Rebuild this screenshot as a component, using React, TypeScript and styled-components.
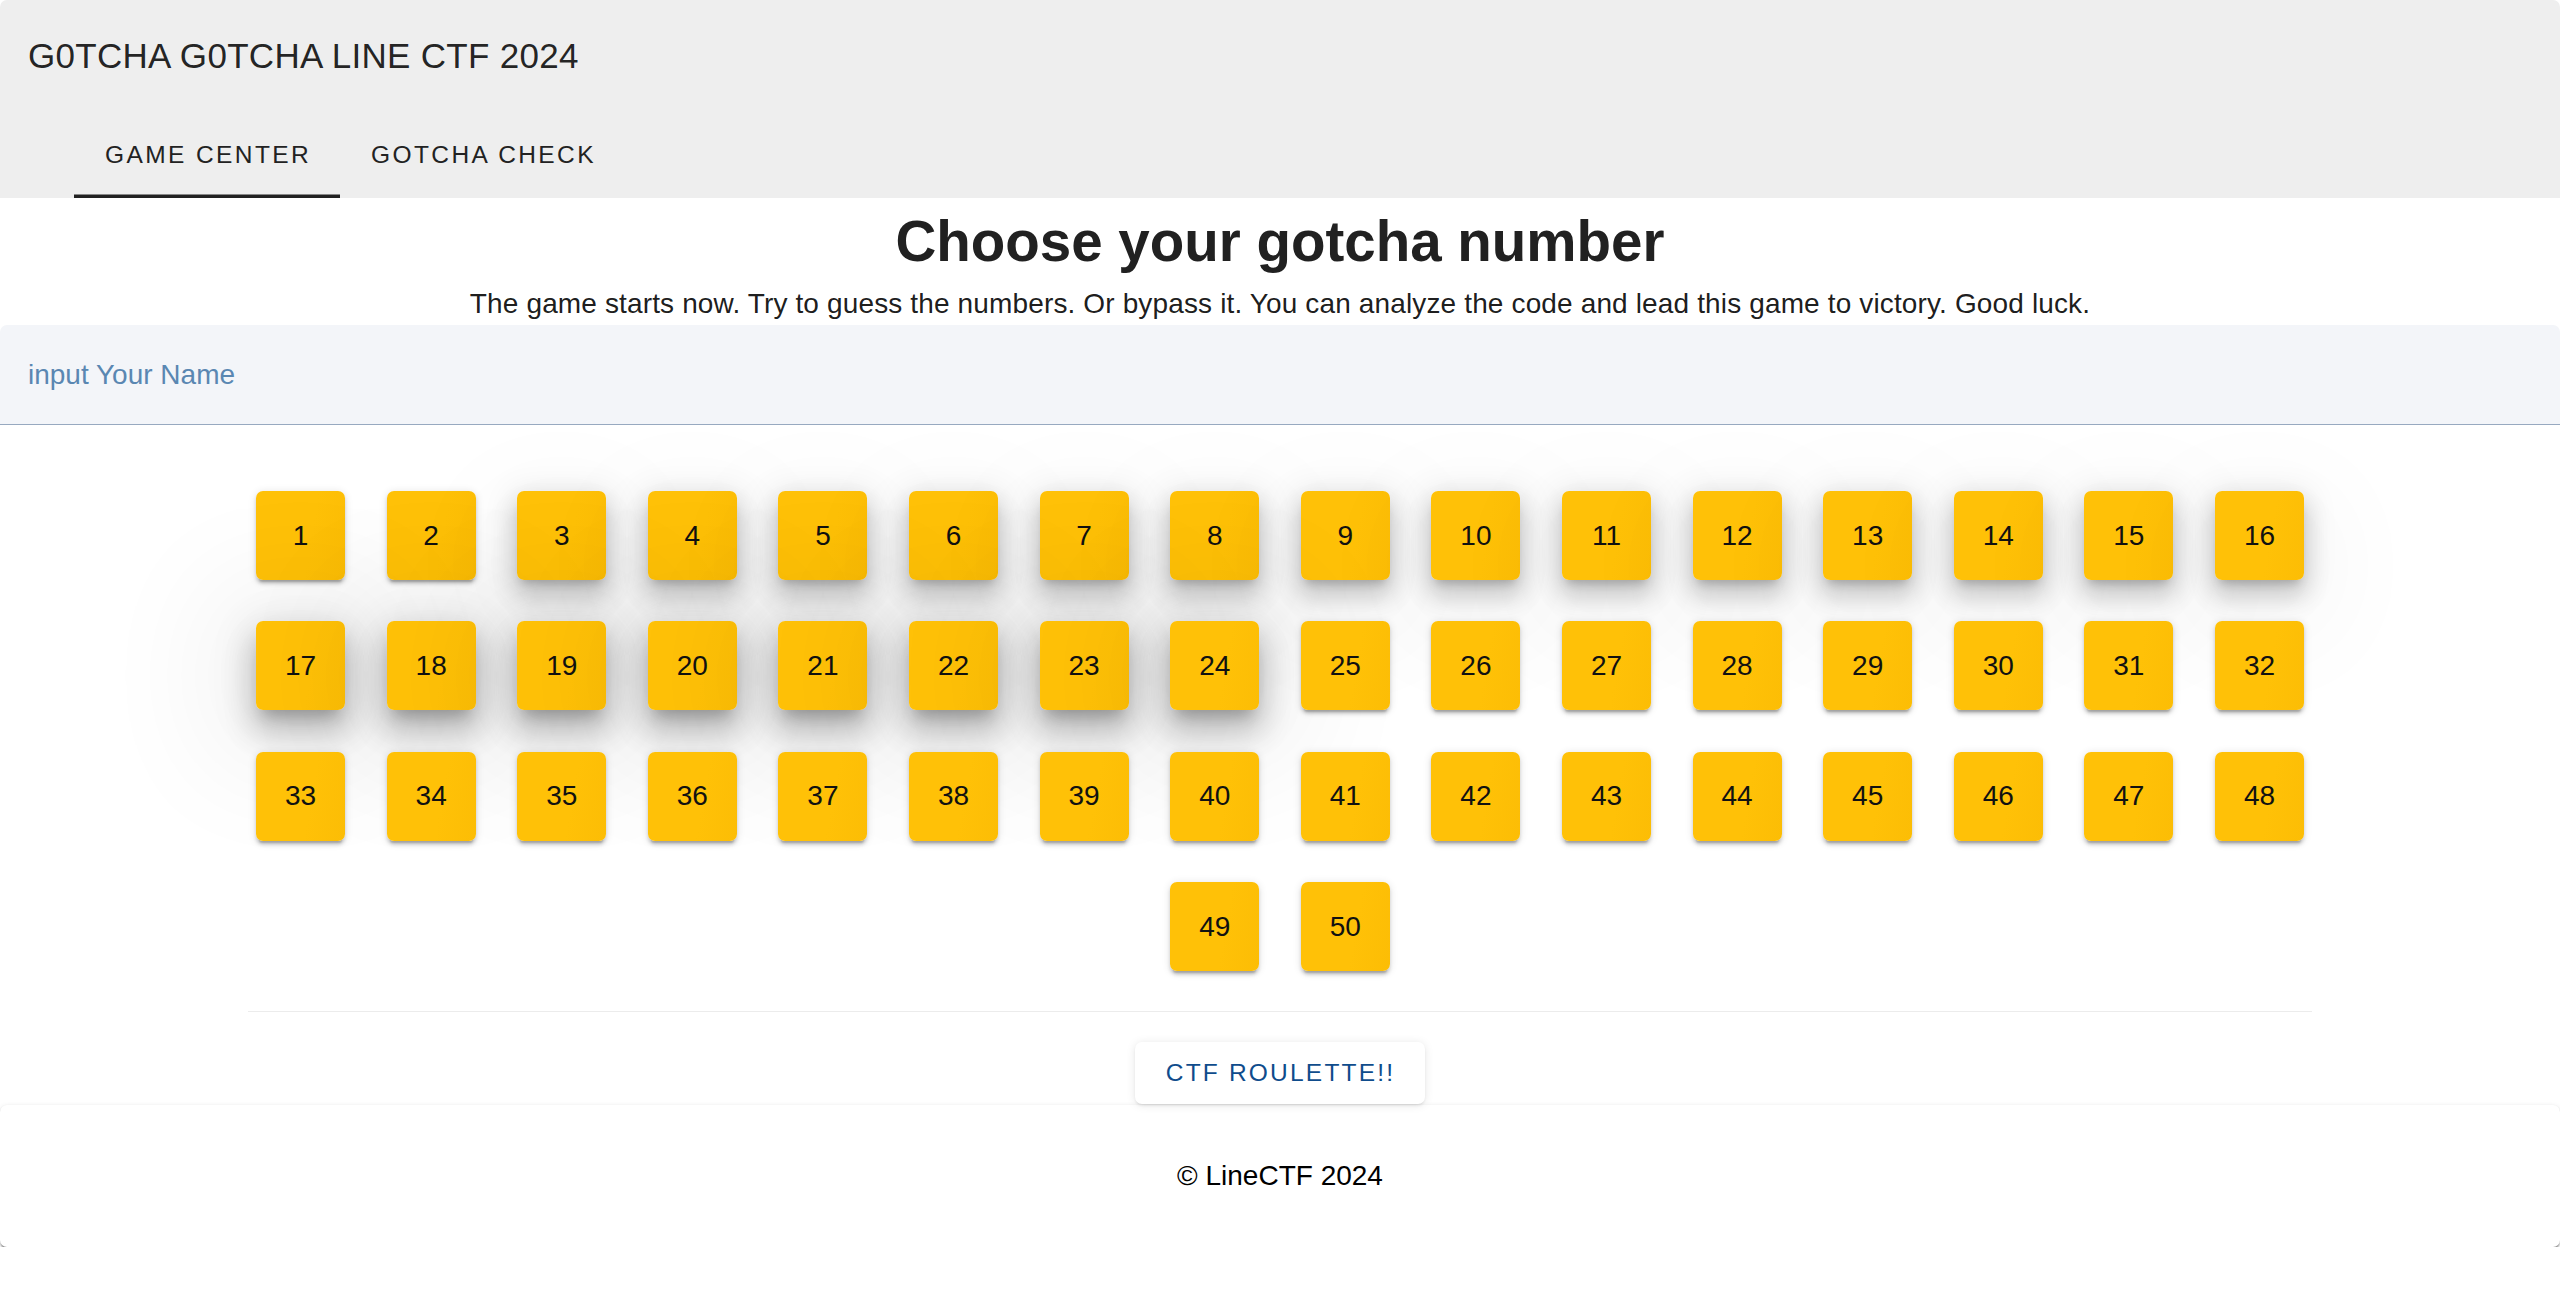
import React, { useState } from 'react';
import styled, { createGlobalStyle, css } from 'styled-components';

type Lift = 'low' | 'mid' | 'high';

const numbers = Array.from({ length: 50 }, (_, i) => i + 1);

const liftOf = (n: number): Lift => {
  if (n >= 17 && n <= 24) return 'high';
  if (n >= 3 && n <= 16) return 'mid';
  return 'low';
};

function App() {
  const [tab, setTab] = useState<number>(0);
  const [name, setName] = useState<string>('');
  const [picked, setPicked] = useState<number | null>(null);

  return (
    <>
      <GlobalStyle />
      <Header>
        <Toolbar>
          <Title>G0TCHA G0TCHA LINE CTF 2024</Title>
        </Toolbar>
        <TabList>
          {['GAME CENTER', 'GOTCHA CHECK'].map((label, index) => (
            <Tab key={label} active={tab === index} onClick={() => setTab(index)}>
              {label}
            </Tab>
          ))}
        </TabList>
      </Header>

      <Main>
        <Heading>Choose your gotcha number</Heading>
        <Lead>
          The game starts now. Try to guess the numbers. Or bypass it. You can
          analyze the code and lead this game to victory. Good luck.
        </Lead>
        <NameField
          value={name}
          placeholder="input Your Name"
          onChange={(e) => setName(e.target.value)}
        />

        <NumberGrid>
          {numbers.map((n) => (
            <NumberCard
              key={n}
              lift={liftOf(n)}
              selected={picked === n}
              onClick={() => setPicked(n)}
            >
              {n}
            </NumberCard>
          ))}
        </NumberGrid>
        <Divider />
        <RouletteButton>CTF ROULETTE!!</RouletteButton>
      </Main>

      <Footer>© LineCTF 2024</Footer>
    </>
  );
}

export default App;

const GlobalStyle = createGlobalStyle`
  html, body {
    margin: 0;
    padding: 0;
    background: #ffffff;
  }
  body {
    font-family: 'Liberation Sans', Arial, sans-serif;
    color: rgba(0, 0, 0, 0.87);
  }
  * {
    box-sizing: border-box;
  }
`;

const Header = styled.header`
  background: #eeeeee;
  border-radius: 7px 7px 0 0;
  display: flex;
  flex-direction: column;
`;

const Toolbar = styled.div`
  height: 112px;
  display: flex;
  align-items: center;
  padding-left: 28px;
`;

const Title = styled.h1`
  margin: 0;
  font-size: 35px;
  font-weight: 400;
  letter-spacing: 0.3px;
  color: rgba(0, 0, 0, 0.87);
`;

const TabList = styled.nav`
  height: 86px;
  display: flex;
  padding-left: 74px;
`;

type tabProps = {
  active: boolean;
};

const Tab = styled.button<tabProps>`
  height: 100%;
  padding: 0 29px 0 31px;
  border: none;
  background: transparent;
  font-family: inherit;
  font-size: 24.5px;
  font-weight: 400;
  letter-spacing: 2.4px;
  color: #222222;
  cursor: pointer;
  ${(props) =>
    props.active &&
    css`
      box-shadow: inset 0 -3.5px 0 #212121;
    `}
`;

const Main = styled.main`
  display: flex;
  flex-direction: column;
  align-items: center;
`;

const Heading = styled.h2`
  margin: 12px 0 0;
  font-size: 56.5px;
  line-height: 64px;
  font-weight: 700;
  color: #212121;
  text-align: center;
`;

const Lead = styled.p`
  margin: 9px 0 0;
  font-size: 28px;
  line-height: 42px;
  letter-spacing: 0.14px;
  color: rgba(0, 0, 0, 0.9);
  text-align: center;
`;

const NameField = styled.input`
  width: 100%;
  height: 100px;
  padding: 0 28px;
  border: none;
  border-bottom: 1.75px solid #97a9c0;
  border-radius: 7px 7px 0 0;
  background: #f3f5f9;
  font-family: inherit;
  font-size: 28px;
  color: #1f3a5a;
  outline: none;

  &::placeholder {
    color: #5a87b2;
    opacity: 1;
  }
`;

const NumberGrid = styled.div`
  width: 2064px;
  margin-top: 66px;
  padding: 0 8px;
  display: flex;
  flex-wrap: wrap;
  justify-content: center;
  gap: 41.4px 41.6px;
`;

const liftShadow = {
  low: css`
    box-shadow: 0 5px 2px -3.5px rgba(0, 0, 0, 0.2),
      0 3.5px 3.5px 0 rgba(0, 0, 0, 0.14), 0 1.75px 9px 0 rgba(0, 0, 0, 0.12);
  `,
  mid: css`
    box-shadow: 0 8px 10px -5px rgba(0, 0, 0, 0.2),
      0 16px 24px 2px rgba(0, 0, 0, 0.13), 0 6px 30px 5px rgba(0, 0, 0, 0.1),
      0 30px 110px 30px rgba(0, 0, 0, 0.035);
  `,
  high: css`
    box-shadow: 0 12px 14px -7px rgba(0, 0, 0, 0.22),
      0 21px 31px 3px rgba(0, 0, 0, 0.16), 0 9px 40px 7px rgba(0, 0, 0, 0.1),
      0 10px 120px 50px rgba(0, 0, 0, 0.05);
  `,
};

type cardProps = {
  lift: Lift;
  selected: boolean;
};

const NumberCard = styled.button<cardProps>`
  width: 89px;
  height: 89px;
  border: none;
  border-radius: 7px;
  background: linear-gradient(100deg, #ffc107 0%, #ffc107 60%, #fcbd05 100%);
  font-family: inherit;
  font-size: 28px;
  color: #111111;
  display: flex;
  align-items: center;
  justify-content: center;
  cursor: pointer;
  ${(props) => liftShadow[props.lift]};
  outline: ${(props) => (props.selected ? '2px solid #0f4c8c' : 'none')};
`;

const Divider = styled.hr`
  width: 2064px;
  margin: 40px 0 0;
  border: none;
  border-top: 1.75px solid #ececec;
`;

const RouletteButton = styled.button`
  margin-top: 30px;
  height: 62px;
  padding: 0 30px 0 31px;
  border: none;
  border-radius: 7px;
  background: #ffffff;
  font-family: inherit;
  font-size: 24.5px;
  font-weight: 400;
  letter-spacing: 2.2px;
  color: #0f4c8c;
  cursor: pointer;
  box-shadow: 0 2px 3px -1px rgba(0, 0, 0, 0.12),
    0 1px 10px 0 rgba(0, 0, 0, 0.1);
`;

const Footer = styled.footer`
  margin-top: 1px;
  height: 142px;
  display: flex;
  align-items: center;
  justify-content: center;
  border-radius: 7px;
  background: #ffffff;
  font-size: 28px;
  color: #000000;
  box-shadow: 0 3px 2px -1px rgba(0, 0, 0, 0.32),
    0 1.75px 1.75px 0 rgba(0, 0, 0, 0.16), 0 1.75px 5px 0 rgba(0, 0, 0, 0.1);
`;
